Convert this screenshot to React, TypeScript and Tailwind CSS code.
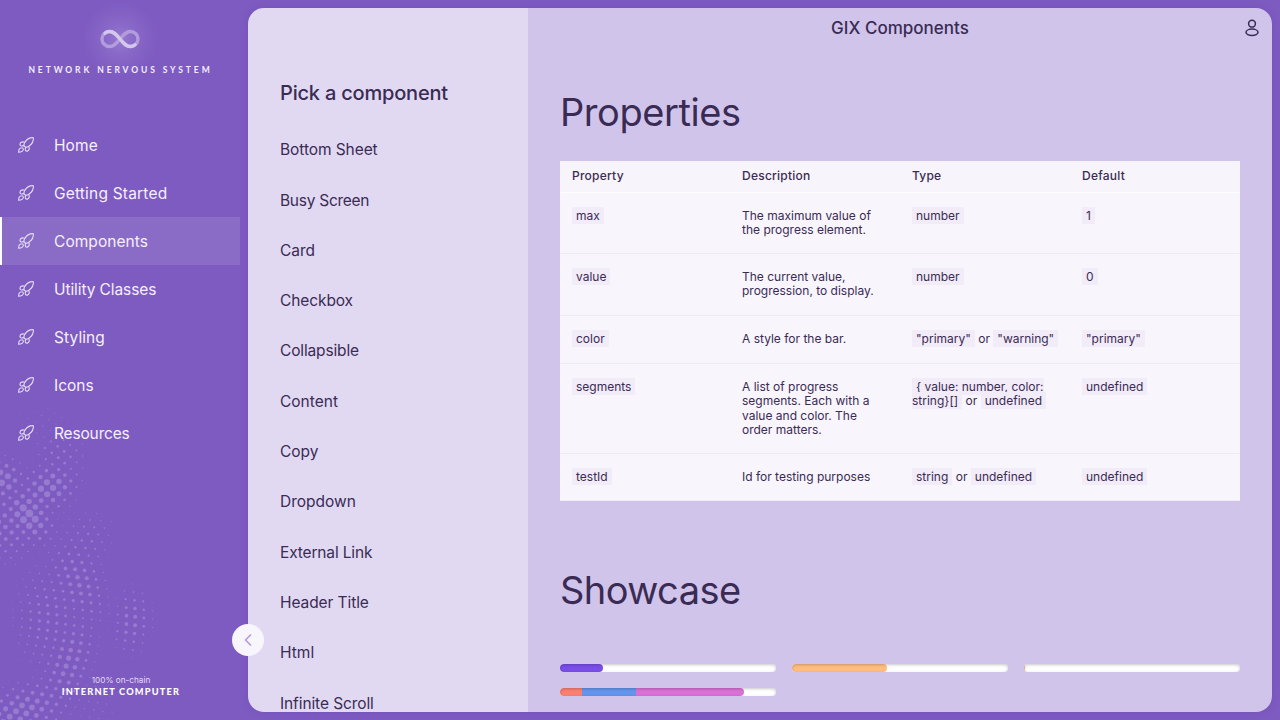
import React from "react";
import { ChevronLeft } from "lucide-react";

const NAV: { label: string; tracking: string }[] = [
  { label: "Home", tracking: "tracking-[0.100px]" },
  { label: "Getting Started", tracking: "tracking-[0.190px]" },
  { label: "Components", tracking: "tracking-[0.060px]" },
  { label: "Utility Classes", tracking: "tracking-[-0.090px]" },
  { label: "Styling", tracking: "tracking-[0.100px]" },
  { label: "Icons", tracking: "tracking-normal" },
  { label: "Resources", tracking: "tracking-[-0.160px]" },
];

const COMPONENTS: { label: string; tracking: string }[] = [
  { label: "Bottom Sheet", tracking: "tracking-[-0.080px]" },
  { label: "Busy Screen", tracking: "tracking-[-0.270px]" },
  { label: "Card", tracking: "tracking-normal" },
  { label: "Checkbox", tracking: "tracking-[-0.100px]" },
  { label: "Collapsible", tracking: "tracking-[-0.150px]" },
  { label: "Content", tracking: "tracking-normal" },
  { label: "Copy", tracking: "tracking-normal" },
  { label: "Dropdown", tracking: "tracking-normal" },
  { label: "External Link", tracking: "tracking-[-0.150px]" },
  { label: "Header Title", tracking: "tracking-[-0.080px]" },
  { label: "Html", tracking: "tracking-normal" },
  { label: "Infinite Scroll", tracking: "tracking-[-0.100px]" },
];

function Rocket() {
  return (
    <svg className="size-5 shrink-0" viewBox="0 0 20 20" fill="none" stroke="#e4daf5" strokeWidth="1.150" strokeLinecap="round" strokeLinejoin="round">
      <path d="M17.400 2.700c-3.300-.2-6.300 1.300-8.300 4.200-.8 1.200-1.200 2.500-1.300 3.600l1.900 1.900c1.200-.1 2.400-.6 3.600-1.500 2.900-2.100 4.300-4.900 4.100-8.200Z" />
      <path d="M8.500 7.200c-2.300-.8-4.100 0-4.500 1.800-.3 1.600 1.400 2.500 3.600 1.600M12.900 11.500c.9 2.300.1 4.200-1.700 4.600-1.600.3-2.500-1.400-1.600-3.600" />
      <path d="M5.600 12.800c-1.900.1-2.900 1.600-3 4.400 2.800-.1 4.500-.9 4.700-2.700.1-1.100-.7-1.800-1.700-1.700Z" />
    </svg>
  );
}

function Logo() {
  return (
    <svg className="h-[80px] w-[120px]" viewBox="0 0 120 80" fill="none">
      <defs>
        <radialGradient id="glow">
          <stop offset="0" stopColor="#c3aee8" stopOpacity="0.36" />
          <stop offset="0.500" stopColor="#b79fe2" stopOpacity="0.160" />
          <stop offset="1" stopColor="#b79fe2" stopOpacity="0" />
        </radialGradient>
      </defs>
      <circle cx="60" cy="40" r="38" fill="url(#glow)" />
      <path d="M60 40c4-5 6.500-7.500 10.500-7.500a7.500 7.500 0 0 1 0 15c-4 0-6.500-2.500-10.500-7.500s-6.500-7.500-10.500-7.500a7.500 7.500 0 0 0 0 15c4 0 6.500-2.500 10.500-7.500" stroke="#b29cdc" strokeWidth="3.400" />
      <path d="M45 34.200c1.200-1.100 2.700-1.700 4.500-1.700 4 0 6.500 2.500 10.500 7.500s6.500 7.500 10.500 7.500c1.800 0 3.300-.6 4.500-1.700" stroke="#d5c8ed" strokeWidth="3.400" strokeLinecap="round" />
    </svg>
  );
}

// Clusters of the dotted wave: x, y, spread x, spread y, rotation, radius.
const CLUSTERS = [
  [28, 507, 13, 20, -0.6, 3.9],
  [48, 480, 20, 15, -0.5, 3.3],
  [3, 472, 13, 14, 0, 3.4],
  [5, 515, 24, 26, 0.4, 2.4],
  [78, 573, 17, 30, -0.4, 2.3],
  [68, 655, 15, 34, 0.3, 2.600],
  [20, 704, 38, 17, -0.4, 3.0],
  [132, 613, 13, 22, 0.1, 2.1],
  [84, 535, 20, 26, 0.6, 1.300],
  [50, 610, 25, 38, 0, 1.700],
  [60, 448, 18, 18, 0, 1.500],
  [45, 415, 35, 20, 0, 0.600],
  [95, 700, 18, 24, 0, 0.800],
];

function dotRadius(x: number, y: number) {
  let r = 0;
  for (const [cx, cy, sx, sy, rot, size] of CLUSTERS) {
    const dx = x - cx;
    const dy = y - cy;
    const u = (dx * Math.cos(rot) + dy * Math.sin(rot)) / sx;
    const v = (-dx * Math.sin(rot) + dy * Math.cos(rot)) / sy;
    r = Math.max(r, size * Math.exp(-(u * u + v * v) / 2));
  }
  return r;
}

const DOTS: { x: number; y: number; r: number }[] = [];
for (let ring = 0; ring < 22; ring++) {
  const radius = 66 + ring * 8.7;
  const step = 8.3 / radius;
  const count = Math.ceil(2.6 / step);
  for (let i = 0; i < count; i++) {
    const a = -1.3 + (i + (ring % 2) / 2) * step;
    const x = -70 + radius * Math.cos(a);
    const y = 610 + radius * Math.sin(a);
    if (x < -4 || y > 724 || y < 372) continue;
    const r = dotRadius(x, y);
    if (r > 0.42) DOTS.push({ x, y: y - 370, r });
  }
}

function DotWave() {
  return (
    <svg className="pointer-events-none absolute bottom-0 left-0 h-[350px] w-[240px]" viewBox="0 0 240 350" fill="#967bcf">
      {DOTS.map((d, i) => (
        <circle key={i} cx={d.x} cy={d.y + 8} r={d.r} />
      ))}
    </svg>
  );
}

function Sidebar() {
  return (
    <aside className="relative flex w-[240px] shrink-0 flex-col">
      <DotWave />
      <div className="relative flex h-[121px] flex-col items-center">
        <div className="-mt-px h-[67px]"><Logo /></div>
        <div className="pl-px font-['Lato'] text-[8.500px] font-bold leading-[9px] tracking-[2.900px] whitespace-nowrap text-[#f3eefb]">NETWORK NERVOUS SYSTEM</div>
      </div>
      <nav className="relative flex flex-col">
        {NAV.map((n) => (
          <a
            key={n.label}
            className={
              n.label === "Components"
                ? "flex h-12 items-center gap-[18px] border-l-2 border-white bg-[#8a6cc7] pl-3.5 text-[15.500px] text-[#f5f0fc]"
                : "flex h-12 items-center gap-[18px] pl-4 text-[15.500px] text-[#f5f0fc]"
            }
          >
            <Rocket />
            <span className={`pt-0.5 ${n.tracking}`}>{n.label}</span>
          </a>
        ))}
      </nav>
      <footer className="relative mt-auto mb-[22px] flex flex-col items-center pl-[2px] text-center">
        <span className="text-[8.200px] leading-3 text-[#e4daf5]">100% on-chain</span>
        <span className="font-['Lato'] text-[9.200px] leading-3 font-black tracking-[1.200px] text-white">INTERNET COMPUTER</span>
      </footer>
    </aside>
  );
}

function Code({ children }: { children: React.ReactNode }) {
  return <code className="bg-[#f2ecf8] px-1 py-px font-['Inter',sans-serif]">{children}</code>;
}

const ROWS: { name: string; height: string; description: string; type: React.ReactNode; initial: string }[] = [
  { name: "max", height: "h-[61px]", description: "The maximum value of the progress element.", type: <Code>number</Code>, initial: "1" },
  { name: "value", height: "h-[62px]", description: "The current value, progression, to display.", type: <Code>number</Code>, initial: "0" },
  { name: "color", height: "h-[48px]", description: "A style for the bar.", type: <><Code>"primary"</Code> or <Code>"warning"</Code></>, initial: '"primary"' },
  {
    name: "segments",
    height: "h-[90px]",
    description: "A list of progress segments. Each with a value and color. The order matters.",
    type: <><Code>{"{ value: number, color:"}<br />{"string}[]"}</Code> or <Code>undefined</Code></>,
    initial: "undefined",
  },
  { name: "testId", height: "h-[47px]", description: "Id for testing purposes", type: <><Code>string</Code> or <Code>undefined</Code></>, initial: "undefined" },
];

function PropertiesTable() {
  return (
    <div className="mt-[25px] bg-[#f8f5fc] text-[12px] leading-[14.400px]">
      <div className="grid h-8 grid-cols-4 items-center border-b border-[#fdfcfe] bg-[#f7f5fb] pb-px font-medium tracking-[0.240px]">
        {["Property", "Description", "Type", "Default"].map((h) => (
          <div key={h} className="px-3">{h}</div>
        ))}
      </div>
      {ROWS.map((r) => (
        <div key={r.name} className={`grid grid-cols-4 border-b border-[#efeaf5] pt-4 ${r.height}`}>
          <div className="pl-3"><Code>{r.name}</Code></div>
          <div className="pr-6 pl-3">{r.description}</div>
          <div className="pl-3 whitespace-nowrap">{r.type}</div>
          <div className="pl-3"><Code>{r.initial}</Code></div>
        </div>
      ))}
    </div>
  );
}

function Progress({ children }: { children: React.ReactNode }) {
  return (
    <div className="relative h-2 overflow-hidden rounded bg-white">
      <div className="flex h-full">{children}</div>
      <div className="absolute inset-0 rounded shadow-[inset_0_1px_3px_rgba(0,0,0,0.220)]" />
    </div>
  );
}

export default function App() {
  return (
    <div className="relative flex h-[720px] w-[1280px] overflow-hidden bg-[#7d5bc1] font-['Inter',sans-serif] text-[#3a2b54]">
      <Sidebar />
      <div className="m-2 flex min-w-0 flex-1 overflow-hidden rounded-2xl shadow-[0_0_8px_rgba(70,40,140,0.150)]">
        <section className="w-[280px] shrink-0 bg-[#e1d9f2] pt-[71px] pl-8">
          <h2 className="text-[20px] leading-7 font-medium tracking-[-0.200px]">Pick a component</h2>
          <ul className="mt-[17.700px] text-[15.500px]">
            {COMPONENTS.map((c) => (
              <li key={c.label} className={`flex h-[50.320px] items-center ${c.tracking}`}>{c.label}</li>
            ))}
          </ul>
        </section>
        <main className="flex min-w-0 flex-1 flex-col bg-[#d0c4eb] px-8">
          <header className="relative flex h-10 shrink-0 items-center justify-center">
            <h1 className="pt-0.5 text-[17px] font-medium tracking-[0.020px]">GIX Components</h1>
            <svg className="absolute top-[10px] -right-[22px] size-5" viewBox="0 0 20 20" fill="none" stroke="#3a2b54" strokeWidth="1.500">
              <circle cx="10" cy="5.700" r="3.400" />
              <ellipse cx="10" cy="14.300" rx="6" ry="3.200" />
            </svg>
          </header>
          <h2 className="mt-10 h-12 text-[38px] leading-[48px] tracking-[-0.430px]">Properties</h2>
          <PropertiesTable />
          <h2 className="mt-[65px] h-12 shrink-0 text-[38px] leading-[48px] tracking-[-0.560px]">Showcase</h2>
          <div className="mt-[50px] grid grid-cols-3 gap-4">
            <Progress><span className="w-[20%] rounded-r bg-[#7a4ee8]" /></Progress>
            <Progress><span className="w-[44%] rounded-r bg-[#ffbd80]" /></Progress>
            <Progress><span className="w-px bg-[#ffbd80]" /></Progress>
            <Progress>
              <span className="w-[10%] bg-[#fa8072]" />
              <span className="w-[25%] bg-[#6495ed]" />
              <span className="w-[50%] rounded-r bg-[#da70d6]" />
            </Progress>
          </div>
        </main>
      </div>
      <button className="absolute top-[624px] left-[232px] flex size-8 items-center justify-center rounded-full bg-[#f8f5fc]">
        <ChevronLeft className="size-5 text-[#b49bdf]" strokeWidth={2} />
      </button>
    </div>
  );
}
